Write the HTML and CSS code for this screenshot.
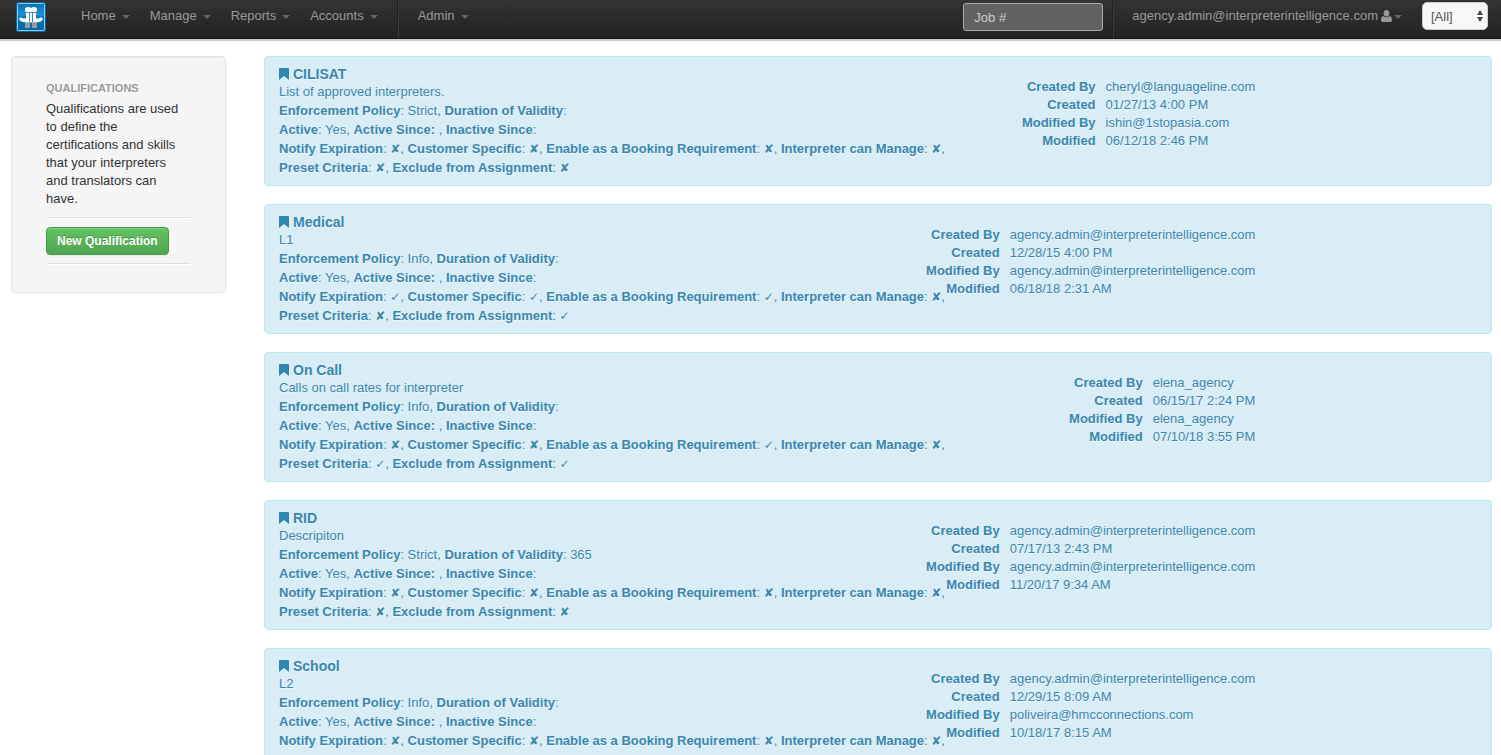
FILE: index.html
```html
<!DOCTYPE html>
<html lang="en">
<head>
<meta charset="utf-8">
<title>Qualifications</title>
<link rel="stylesheet" href="styles.css">
</head>
<body>
<svg class="defs" aria-hidden="true">
  <symbol id="bookmark" viewBox="0 0 10 12"><path d="M0 1Q0 0 1 0H9Q10 0 10 1V12L5 8L0 12Z"/></symbol>
</svg>
<header class="navbar">
  <a class="brand" href="#" aria-label="Home page">
    <svg viewBox="0 0 30 30">
      <defs><linearGradient id="sky" x1="0" y1="0" x2="0" y2="1"><stop offset="0" stop-color="#0873b4"/><stop offset=".42" stop-color="#2293cf"/><stop offset=".5" stop-color="#0875b9"/><stop offset="1" stop-color="#0567a7"/></linearGradient></defs>
      <rect width="30" height="30" rx="2" fill="#0769a9"/>
      <rect x="1.5" y="1.5" width="27" height="27" rx="1" fill="url(#sky)" stroke="#8dc9ec"/>
      <path fill="#fff" d="M9 7.500Q9 5 12 5Q14 5 15 6Q16 5 18 5Q21 5 21 7.500Q21 9.500 20 10.500V16.500Q24 16.500 25 15L27 17Q26 20 20 20.500H10Q4 20 3 17L5 15Q6 16.500 10 16.500V10.500Q9 9.500 9 7.500Z"/>
      <path d="M10 10.500H20M13.500 11V20M16.500 11V20" stroke="#0873b4" stroke-width=".8" fill="none"/>
      <path fill="#999" d="M9 21H14V26H9ZM16 21H21V26H16Z"/>
    </svg>
  </a>
  <nav class="menu">
    <a href="#">Home<i class="caret"></i></a>
    <a href="#">Manage<i class="caret"></i></a>
    <a href="#">Reports<i class="caret"></i></a>
    <a href="#">Accounts<i class="caret"></i></a>
    <span class="divider"></span>
    <a href="#">Admin<i class="caret"></i></a>
  </nav>
  <div class="tools">
    <input class="search" type="text" placeholder="Job #" aria-label="Job number">
    <span class="divider"></span>
    <a class="account" href="#">agency.admin@interpreterintelligence.com<svg class="user" viewBox="0 0 10 11"><ellipse cx="5" cy="3" rx="2.600" ry="3"/><path d="M2 5.500Q5 8 8 5.500Q10 6 10 9.500Q10 11 8.500 11H1.500Q0 11 0 9.500Q0 6 2 5.500Z"/></svg><i class="caret"></i></a>
    <div class="picker">
      <select aria-label="Scope"><option>[All]</option></select>
      <svg viewBox="0 0 6 12"><path d="M3 0L6 5H0ZM0 7H6L3 12Z"/></svg>
    </div>
  </div>
</header>
<div class="page">
  <aside class="sidebar">
    <h2>Qualifications</h2>
    <p>Qualifications are used to define the certifications and skills that your interpreters and translators can have.</p>
    <hr>
    <button type="button">New Qualification</button>
    <hr>
  </aside>
  <main class="list">
    <article class="card">
      <div class="details">
        <h3><svg><use href="#bookmark"/></svg>CILISAT</h3>
        <p class="summary">List of approved interpreters.</p>
        <p><b>Enforcement Policy</b>: Strict, <b>Duration of Validity</b>:</p>
        <p><b>Active</b>: Yes, <b>Active Since:</b> , <b>Inactive Since</b>:</p>
        <p><b>Notify Expiration</b>: <i>✘</i>, <b>Customer Specific</b>: <i>✘</i>, <b>Enable as a Booking Requirement</b>: <i>✘</i>, <b>Interpreter can Manage</b>: <i>✘</i>,</p>
        <p><b>Preset Criteria</b>: <i>✘</i>, <b>Exclude from Assignment</b>: <i>✘</i></p>
      </div>
      <dl class="meta"><dt>Created By</dt><dd>cheryl@languageline.com</dd><dt>Created</dt><dd>01/27/13 4:00 PM</dd><dt>Modified By</dt><dd>ishin@1stopasia.com</dd><dt>Modified</dt><dd>06/12/18 2:46 PM</dd></dl>
    </article>
    <article class="card">
      <div class="details">
        <h3><svg><use href="#bookmark"/></svg>Medical</h3>
        <p class="summary">L1</p>
        <p><b>Enforcement Policy</b>: Info, <b>Duration of Validity</b>:</p>
        <p><b>Active</b>: Yes, <b>Active Since:</b> , <b>Inactive Since</b>:</p>
        <p><b>Notify Expiration</b>: <i>✓</i>, <b>Customer Specific</b>: <i>✓</i>, <b>Enable as a Booking Requirement</b>: <i>✓</i>, <b>Interpreter can Manage</b>: <i>✘</i>,</p>
        <p><b>Preset Criteria</b>: <i>✘</i>, <b>Exclude from Assignment</b>: <i>✓</i></p>
      </div>
      <dl class="meta"><dt>Created By</dt><dd>agency.admin@interpreterintelligence.com</dd><dt>Created</dt><dd>12/28/15 4:00 PM</dd><dt>Modified By</dt><dd>agency.admin@interpreterintelligence.com</dd><dt>Modified</dt><dd>06/18/18 2:31 AM</dd></dl>
    </article>
    <article class="card">
      <div class="details">
        <h3><svg><use href="#bookmark"/></svg>On Call</h3>
        <p class="summary">Calls on call rates for interpreter</p>
        <p><b>Enforcement Policy</b>: Info, <b>Duration of Validity</b>:</p>
        <p><b>Active</b>: Yes, <b>Active Since:</b> , <b>Inactive Since</b>:</p>
        <p><b>Notify Expiration</b>: <i>✘</i>, <b>Customer Specific</b>: <i>✘</i>, <b>Enable as a Booking Requirement</b>: <i>✓</i>, <b>Interpreter can Manage</b>: <i>✘</i>,</p>
        <p><b>Preset Criteria</b>: <i>✓</i>, <b>Exclude from Assignment</b>: <i>✓</i></p>
      </div>
      <dl class="meta"><dt>Created By</dt><dd>elena_agency</dd><dt>Created</dt><dd>06/15/17 2:24 PM</dd><dt>Modified By</dt><dd>elena_agency</dd><dt>Modified</dt><dd>07/10/18 3:55 PM</dd></dl>
    </article>
    <article class="card">
      <div class="details">
        <h3><svg><use href="#bookmark"/></svg>RID</h3>
        <p class="summary">Descripiton</p>
        <p><b>Enforcement Policy</b>: Strict, <b>Duration of Validity</b>: 365</p>
        <p><b>Active</b>: Yes, <b>Active Since:</b> , <b>Inactive Since</b>:</p>
        <p><b>Notify Expiration</b>: <i>✘</i>, <b>Customer Specific</b>: <i>✘</i>, <b>Enable as a Booking Requirement</b>: <i>✘</i>, <b>Interpreter can Manage</b>: <i>✘</i>,</p>
        <p><b>Preset Criteria</b>: <i>✘</i>, <b>Exclude from Assignment</b>: <i>✘</i></p>
      </div>
      <dl class="meta"><dt>Created By</dt><dd>agency.admin@interpreterintelligence.com</dd><dt>Created</dt><dd>07/17/13 2:43 PM</dd><dt>Modified By</dt><dd>agency.admin@interpreterintelligence.com</dd><dt>Modified</dt><dd>11/20/17 9:34 AM</dd></dl>
    </article>
    <article class="card">
      <div class="details">
        <h3><svg><use href="#bookmark"/></svg>School</h3>
        <p class="summary">L2</p>
        <p><b>Enforcement Policy</b>: Info, <b>Duration of Validity</b>:</p>
        <p><b>Active</b>: Yes, <b>Active Since:</b> , <b>Inactive Since</b>:</p>
        <p><b>Notify Expiration</b>: <i>✘</i>, <b>Customer Specific</b>: <i>✘</i>, <b>Enable as a Booking Requirement</b>: <i>✘</i>, <b>Interpreter can Manage</b>: <i>✘</i>,</p>
        <p><b>Preset Criteria</b>: <i>✘</i>, <b>Exclude from Assignment</b>: <i>✘</i></p>
      </div>
      <dl class="meta"><dt>Created By</dt><dd>agency.admin@interpreterintelligence.com</dd><dt>Created</dt><dd>12/29/15 8:09 AM</dd><dt>Modified By</dt><dd>poliveira@hmcconnections.com</dd><dt>Modified</dt><dd>10/18/17 8:15 AM</dd></dl>
    </article>
  </main>
</div>
</body>
</html>
```
FILE: styles.css
```css
* { box-sizing: border-box; }
body {
  margin: 0;
  background: #fff;
  color: #333;
  font: 13px/18px "Liberation Sans", Arial, "DejaVu Sans", sans-serif;
}
h2, h3, p, dl, dd { margin: 0; }
.defs { display: none; }

.navbar {
  display: flex;
  height: 39px;
  padding: 0 13px 0 16px;
  background: linear-gradient(#333, #222);
  border-bottom: 1px solid #151515;
  box-shadow: 0 2px 1px rgba(0, 0, 0, .2);
}
.brand svg { display: block; width: 30px; height: 30px; margin-top: 2px; }
.menu { display: flex; margin-left: 25px; }
.menu a, .account {
  display: flex;
  height: 31px;
  align-items: center;
  padding: 0 10px;
  color: #999;
  text-decoration: none;
}
.caret {
  margin: 2px 0 0 6px;
  border: 4px solid transparent;
  border-top-color: #666;
  border-bottom: 0;
}
.divider { width: 2px; height: 38px; background: #222; border-right: 1px solid #3a3a3a; }
.menu .divider { margin: 0 9px; }
.tools { display: flex; margin-left: auto; }
.search {
  width: 140px;
  height: 28px;
  margin: 3px 9px 0 0;
  padding: 0 10px;
  border: 1px solid #aaa;
  border-radius: 3px;
  background: #626262;
  color: #fff;
  font: 13px "Liberation Sans", Arial, sans-serif;
}
.search::placeholder { color: #ccc; opacity: 1; }
.account { padding: 0 20px 0 18px; }
.user { width: 11px; height: 12px; margin-left: 3px; fill: #999; }
.account .caret { margin-left: 2px; }
.picker { position: relative; width: 66px; height: 28px; margin-top: 2px; }
.picker select {
  appearance: none;
  width: 100%;
  height: 100%;
  padding: 0 8px;
  border: 1px solid #ccc;
  border-radius: 5px;
  background: #f8f8f8;
  color: #555;
  font: 13px "Liberation Sans", Arial, sans-serif;
}
.picker svg { position: absolute; top: 8px; right: 5px; width: 6px; height: 12px; fill: #444; pointer-events: none; }

.page { display: flex; align-items: flex-start; gap: 38px; padding: 17px 9px 0 11px; }
.sidebar {
  flex: 0 0 215px;
  padding: 22px 35px 27px 34px;
  background: #f5f5f5;
  border: 1px solid #e3e3e3;
  border-radius: 4px;
  box-shadow: inset 0 1px 1px rgba(0, 0, 0, .05);
}
.sidebar h2 { color: #999; font-size: 11px; line-height: 18px; text-transform: uppercase; text-shadow: 0 1px 0 #fff; }
.sidebar p { margin: 3px 0 9px; }
.sidebar hr { margin: 0 0 0 1px; border: 0; border-top: 1px solid #ddd; border-bottom: 1px solid #fff; }
.sidebar button {
  display: block;
  height: 28px;
  margin: 8px 0;
  padding: 0 10px;
  border: 1px solid #4a9a4a;
  border-radius: 4px;
  background: linear-gradient(#62c462, #51a351);
  box-shadow: inset 0 1px 0 rgba(255, 255, 255, .2), 0 1px 2px rgba(0, 0, 0, .05);
  color: #fff;
  font: bold 12px "Liberation Sans", Arial, sans-serif;
  text-shadow: 0 -1px 0 rgba(0, 0, 0, .25);
  white-space: nowrap;
}

.list { flex: 1; min-width: 0; display: grid; gap: 18px; }
.card {
  display: grid;
  grid-template-columns: 56% 25.5%;
  padding: 8px 14px;
  background: #d9edf7;
  border: 1px solid #bce8f1;
  border-radius: 4px;
  color: #3a87ad;
  text-shadow: 0 1px 0 rgba(255, 255, 255, .5);
  white-space: nowrap;
}
.card h3 { display: flex; align-items: center; gap: 4px; font-size: 14px; line-height: 18px; }
.card h3 svg { width: 10px; height: 12px; fill: #2f86ae; }
.details p { line-height: 19px; }
.details .summary { line-height: 18px; }
.details i { font: bold 12px/1 "DejaVu Sans", sans-serif; }
.meta {
  display: grid;
  grid-template-columns: max-content max-content;
  grid-auto-rows: 18px;
  column-gap: 10px;
  justify-content: end;
  padding-top: 13px;
}
.meta dt { font-weight: bold; text-align: right; }
```
